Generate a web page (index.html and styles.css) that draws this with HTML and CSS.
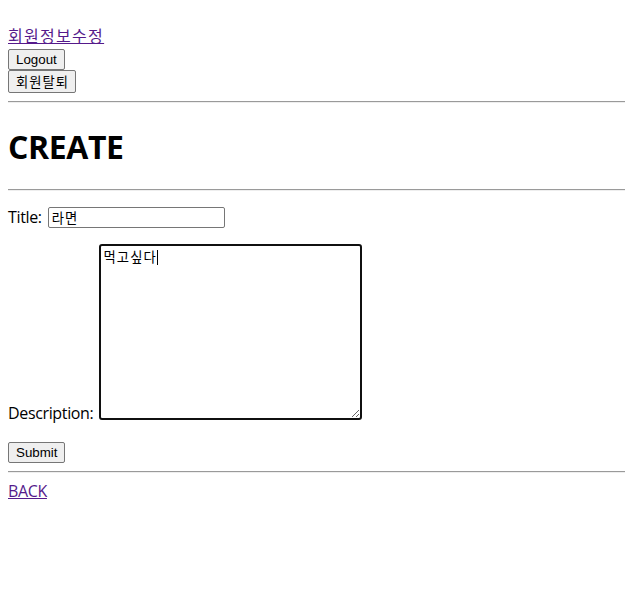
FILE: index.html
```html
<!DOCTYPE html>
<html lang="ko">
<head>
<meta charset="utf-8">
<title>CREATE</title>
<link rel="stylesheet" href="styles.css">
</head>
<body>
<header class="account">
  <a class="link link-ko" href="#">회원정보수정</a>
  <form class="account-form"><button type="button" class="btn btn-en">Logout</button></form>
  <form class="account-form"><button type="button" class="btn btn-ko">회원탈퇴</button></form>
</header>
<hr class="rule">
<h1 class="title">CREATE</h1>
<hr class="rule">
<form class="create">
  <div class="row row-title">
    <label class="label" for="title">Title:</label>
    <input class="text-input" id="title" type="text" value="라면">
  </div>
  <div class="row row-desc">
    <label class="label label-desc" for="desc">Description:</label>
    <span class="area-wrap">
      <textarea class="area" id="desc">먹고싶다</textarea>
      <span class="caret"></span>
    </span>
  </div>
  <div class="row row-submit">
    <button type="button" class="btn btn-en">Submit</button>
  </div>
</form>
<hr class="rule">
<a class="link" href="#">BACK</a>
</body>
</html>
```
FILE: styles.css
```css
html, body {
  background: #ffffff;
}
body {
  margin: 0;
  padding: 0 0 0 8px;
  color: #000000;
  font-family: "Open Sans", "Noto Sans CJK KR", sans-serif;
  font-size: 16px;
  line-height: 21px;
}
.account {
  padding-top: 26px;
  margin-bottom: 1px;
}
.link {
  display: block;
  width: max-content;
  height: 21px;
  color: #551a8b;
  text-decoration: underline;
  letter-spacing: -0.35px;
}
.link-ko {
  letter-spacing: 1.3px;
}
.account-form {
  margin: 0;
}
.account-form:first-of-type {
  margin-top: 2px;
}
.btn {
  display: block;
  box-sizing: border-box;
  margin: 0;
  padding: 0 7px;
  background: #efefef;
  border: 1px solid #767676;
  border-radius: 2px;
  color: #000000;
  font-family: "Liberation Sans", "Noto Sans CJK KR", sans-serif;
  font-size: 13.333px;
}
.btn-en {
  height: 21px;
  line-height: 19px;
}
.btn-ko {
  height: 23px;
  line-height: 21px;
  padding: 0 6px 0 7px;
  font-family: "Noto Sans CJK KR", sans-serif;
  letter-spacing: 1px;
}
.rule {
  height: 0;
  margin: 8px 0;
  border: 0;
  border-top: 1px solid #9a9a9a;
  border-bottom: 1px solid #eeeeee;
}
.title {
  margin: 21.5px 0;
  font-size: 32px;
  line-height: 43px;
  font-weight: 700;
  letter-spacing: -0.4px;
}
.create {
  margin: 16px 0 0;
}
.row {
  display: flex;
  gap: 6px;
}
.row-title {
  align-items: center;
  height: 21px;
}
.row-desc {
  margin-top: 16px;
  align-items: flex-end;
}
.row-submit {
  margin-top: 22px;
}
.label {
  letter-spacing: -0.35px;
  white-space: nowrap;
}
.label-desc {
  margin-bottom: -4px;
}
.text-input {
  box-sizing: border-box;
  width: 177px;
  height: 21px;
  margin: 0;
  padding: 1px 3px;
  border: 1px solid #767676;
  border-radius: 2px;
  font-family: "Noto Sans CJK KR", sans-serif;
  font-size: 13.333px;
  line-height: 17px;
  letter-spacing: 1px;
  color: #000000;
  background: #ffffff;
}
.area-wrap {
  position: relative;
  display: block;
  width: 263px;
  height: 176px;
}
.area {
  display: block;
  box-sizing: border-box;
  width: 263px;
  height: 176px;
  margin: 0;
  padding: 2px 1px 2px 2px;
  border: 2px solid #101010;
  border-radius: 3px;
  outline: none;
  font-family: "Noto Sans CJK KR", sans-serif;
  font-size: 13.333px;
  line-height: 17px;
  letter-spacing: 1.1px;
  color: #000000;
  background: #ffffff;
  resize: both;
}
.caret {
  position: absolute;
  left: 58px;
  top: 6px;
  width: 1px;
  height: 15px;
  background: #000000;
}
```
